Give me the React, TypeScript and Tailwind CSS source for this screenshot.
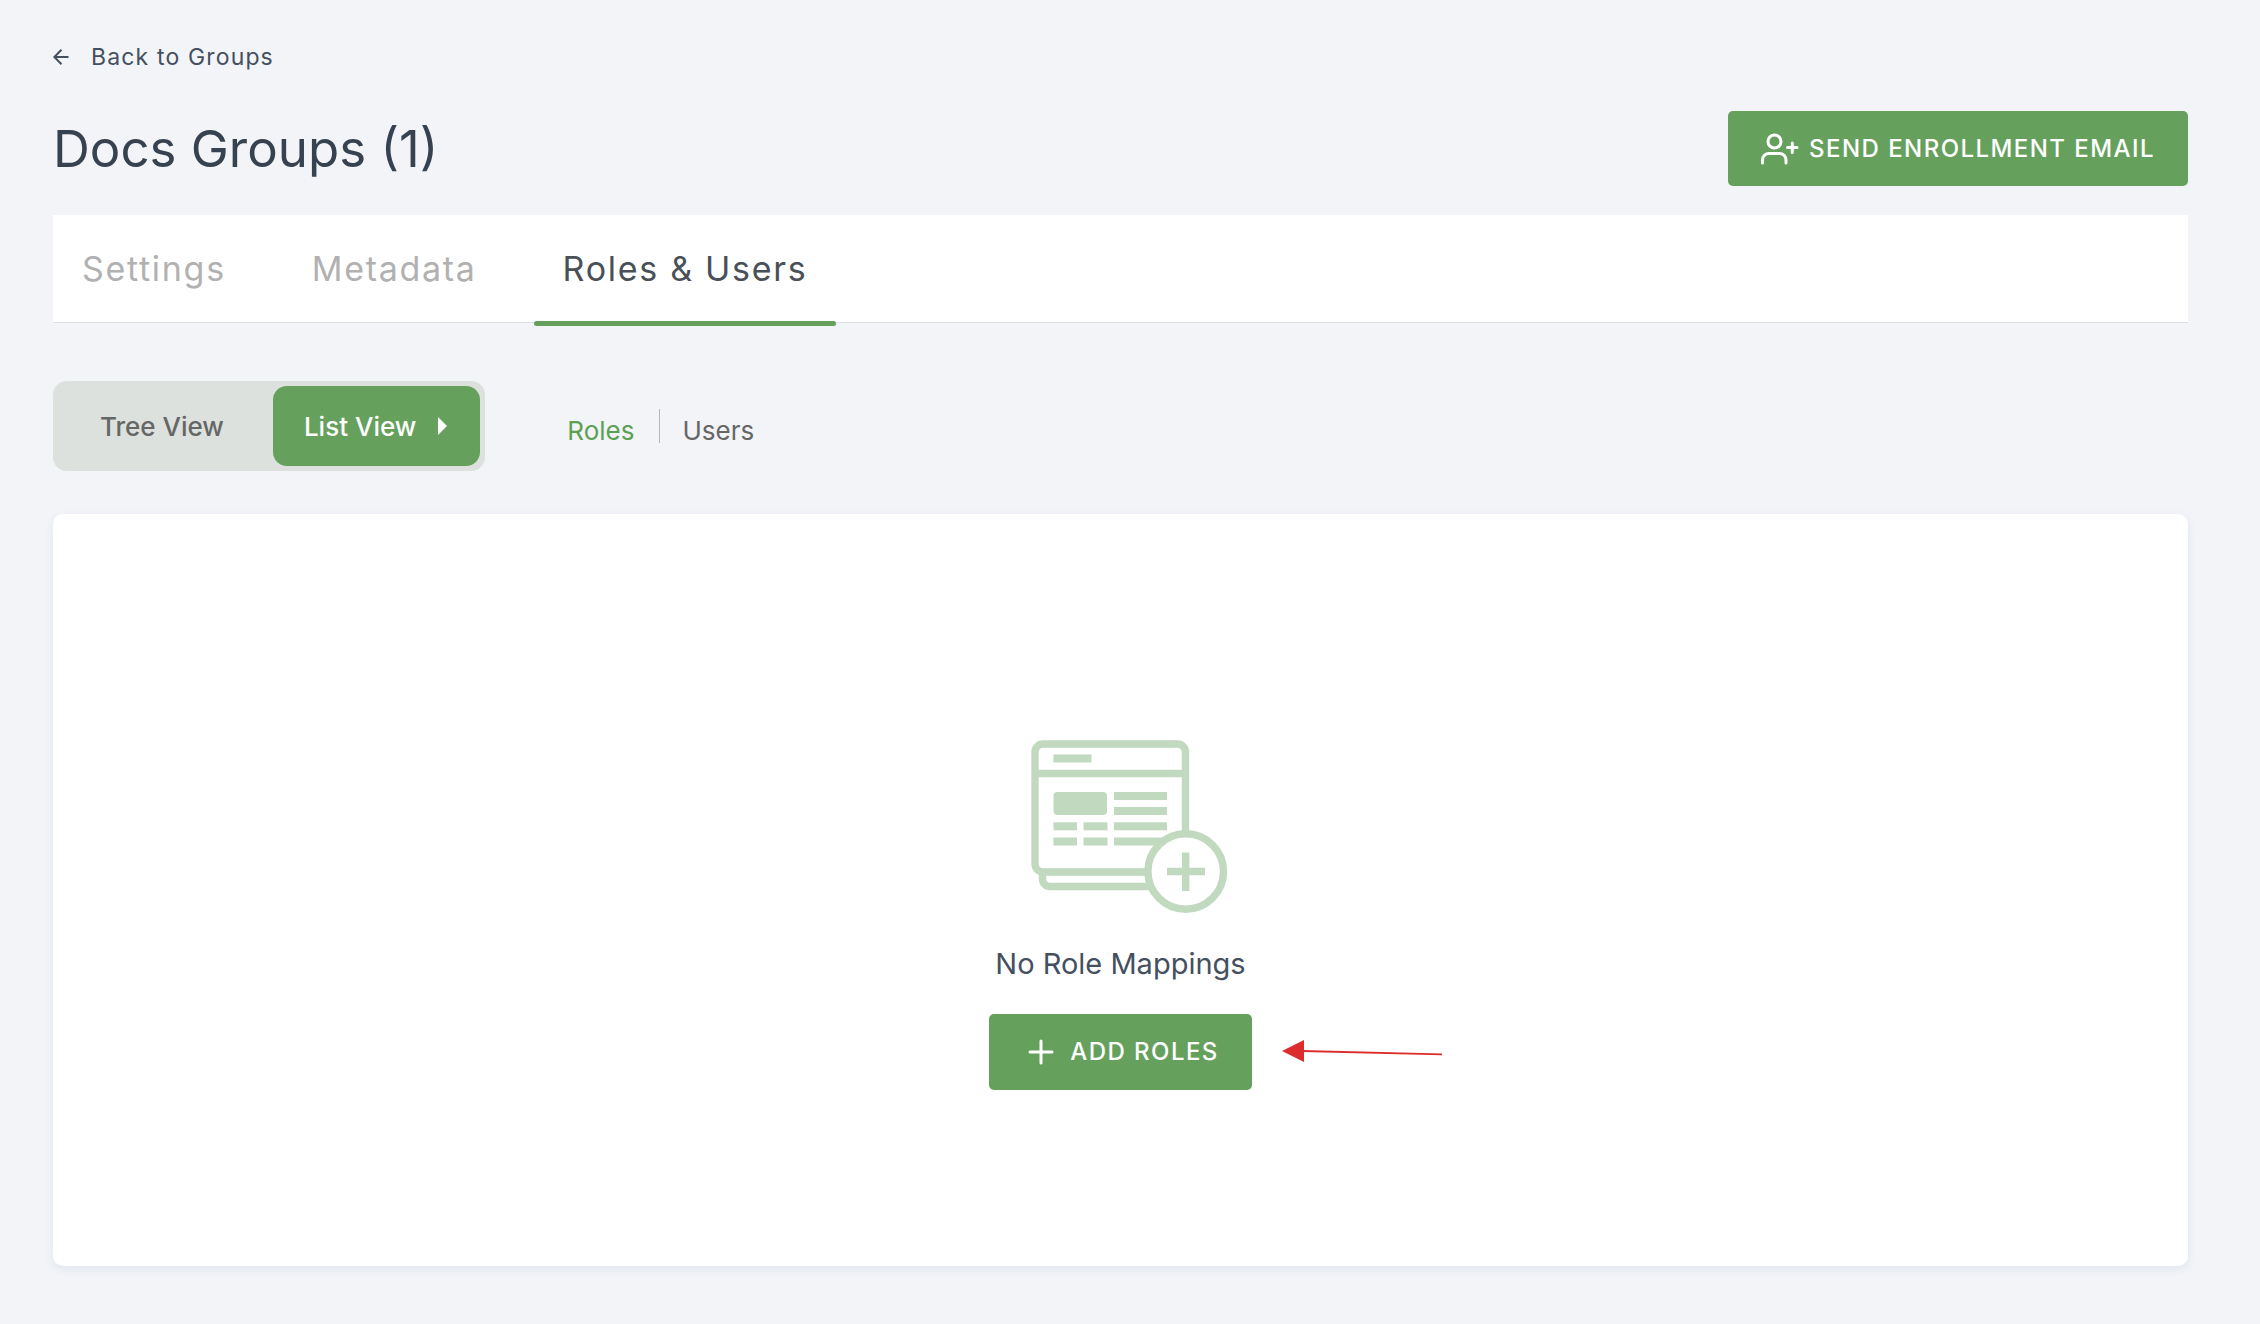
import { useState } from 'react';

const TABS = [
  { id: 'settings', label: 'Settings' },
  { id: 'metadata', label: 'Metadata' },
  { id: 'roles-users', label: 'Roles & Users' },
] as const;

const VIEWS = [
  { id: 'tree', label: 'Tree View' },
  { id: 'list', label: 'List View' },
] as const;

function ArrowLeftIcon() {
  return (
    <svg width="16" height="16" viewBox="0 0 16 16" fill="none" stroke="currentColor" strokeWidth="2" aria-hidden="true">
      <path d="M15.500 8H1.500M8.500 0.800L1.300 8l7.200 7.200" />
    </svg>
  );
}

function UserPlusIcon() {
  return (
    <svg width="38" height="32" viewBox="0 0 38 32" fill="none" stroke="currentColor" strokeWidth="3" strokeLinecap="round" aria-hidden="true">
      <circle cx="13.500" cy="8.500" r="6.500" />
      <path d="M1.500 30v-3a6.500 6.500 0 0 1 6.500-6.500h10.500a6.500 6.500 0 0 1 6.500 6.500v3" />
      <path d="M26.500 14.500h9.500M31.300 10v9.500" />
    </svg>
  );
}

function PlusIcon() {
  return (
    <svg width="26" height="26" viewBox="0 0 26 26" fill="none" stroke="currentColor" strokeWidth="3" strokeLinecap="round" aria-hidden="true">
      <path d="M13 2v22M2 13h22" />
    </svg>
  );
}

function EmptyRolesIcon() {
  return (
    <svg width="197" height="175" viewBox="0 0 197 175" fill="none" stroke="#c1d9bf" strokeWidth="7.400" aria-hidden="true">
      <path d="M154.500 93V13a8 8 0 0 0-8-8H12a8 8 0 0 0-8 8v112a8 8 0 0 0 8 8h105" />
      <path d="M4 34.500h151" />
      <path d="M11.500 133v7a7.500 7.500 0 0 0 7.500 7.500h101" />
      <g fill="#c1d9bf" stroke="none">
        <rect x="22.500" y="15.500" width="38" height="8" />
        <rect x="22.500" y="53" width="53.500" height="23" rx="4" />
        <rect x="83" y="53" width="53" height="8" />
        <rect x="83" y="68" width="53" height="8" />
        <rect x="83" y="83.300" width="53" height="8" />
        <path d="M83 98.500h51l-9 8H83z" />
        <rect x="22.500" y="83.300" width="23.500" height="8" />
        <rect x="52.500" y="83.300" width="24" height="8" />
        <rect x="22.500" y="98.500" width="23.500" height="8" />
        <rect x="52.500" y="98.500" width="24" height="8" />
      </g>
      <circle cx="154.700" cy="132.500" r="37.800" fill="#fff" />
      <path d="M136 132.500h38M154.700 113.500V152" />
    </svg>
  );
}

export default function App() {
  const [tab, setTab] = useState<(typeof TABS)[number]['id']>('roles-users');
  const [view, setView] = useState<(typeof VIEWS)[number]['id']>('list');
  const [list, setList] = useState<'roles' | 'users'>('roles');

  return (
    <main className="flex min-h-screen flex-col bg-[#f2f4f8] pt-[41px] pr-[72px] pb-[58px] pl-[53px] font-[Inter,sans-serif] text-[#364250]">
      <a href="#groups" className="flex items-center gap-[22px] self-start text-[23px] leading-8 tracking-wider text-[#445060]">
        <ArrowLeftIcon />
        Back to Groups
      </a>

      <header className="mt-[38px] flex items-center justify-between">
        <h1 className="text-[51px] leading-[75px]">Docs Groups (1)</h1>
        <button type="button" className="flex h-[75px] items-center gap-2.5 rounded-[5px] bg-[#65a15d] px-[33px] text-2xl font-medium tracking-[0.06em] text-white">
          <UserPlusIcon />
          SEND ENROLLMENT EMAIL
        </button>
      </header>

      <nav className="mt-[29px] flex h-[108px] gap-7 border-b border-[#dddfe4] bg-white">
        {TABS.map((item) => (
          <button
            key={item.id}
            type="button"
            onClick={() => setTab(item.id)}
            className={`relative px-[29px] text-[34px] tracking-wider ${
              tab === item.id ? 'text-[#495057]' : 'text-[#b1b1b1]'
            }`}
          >
            {item.label}
            {tab === item.id && (
              <span className="absolute inset-x-0 -bottom-1 h-[5px] rounded-full bg-[#65a15d]" />
            )}
          </button>
        ))}
      </nav>

      <div className="mt-[58px] flex items-center gap-[82px] text-[26px]">
        <div className="flex h-[90px] rounded-[14px] bg-[#dce1dd] p-[5px] font-medium">
          {VIEWS.map((item) => (
            <button
              key={item.id}
              type="button"
              onClick={() => setView(item.id)}
              className={`flex items-center gap-[22px] rounded-[14px] ${
                view === item.id ? 'bg-[#65a15d] pr-[33px] pl-[31px] text-white' : 'pr-[49px] pl-[42px] text-[#666]'
              }`}
            >
              {item.label}
              {view === item.id && (
                <svg width="9" height="18" viewBox="0 0 9 18" fill="currentColor" aria-hidden="true">
                  <path d="M0 0l9 9-9 9z" />
                </svg>
              )}
            </button>
          ))}
        </div>

        <div className="flex items-center">
          <button
            type="button"
            onClick={() => setList('roles')}
            className={`mt-2 pr-[25px] ${list === 'roles' ? 'text-[#5ba053]' : 'text-[#666]'}`}
          >
            Roles
          </button>
          <span className="h-[34px] w-px bg-[#b4b6ba]" />
          <button
            type="button"
            onClick={() => setList('users')}
            className={`mt-2 pl-[22px] ${list === 'users' ? 'text-[#5ba053]' : 'text-[#666]'}`}
          >
            Users
          </button>
        </div>
      </div>

      <section className="mt-[43px] flex flex-1 flex-col items-center justify-center rounded-[10px] bg-white pt-[49px] shadow-[0_3px_10px_rgba(40,60,100,0.08)]">
        <div className="pl-[18px]">
          <EmptyRolesIcon />
        </div>
        <p className="mt-8 text-[29px] leading-9 text-[#445060]">No Role Mappings</p>
        <div className="relative mt-8">
          <button type="button" className="flex h-[76px] items-center gap-4 rounded-[5px] bg-[#65a15d] px-[33px] pl-[39px] text-2xl font-medium tracking-[0.06em] text-white">
            <PlusIcon />
            ADD ROLES
          </button>
          {/* pointer to the add button */}
          <svg className="absolute top-[26px] left-full ml-[30px]" width="160" height="23" viewBox="0 0 160 23" aria-hidden="true">
            <path d="M0 11L22 0v22z" fill="#dd2c2c" />
            <path d="M20 11l140 3.400" stroke="#dd2c2c" strokeWidth="1.800" />
          </svg>
        </div>
      </section>
    </main>
  );
}
